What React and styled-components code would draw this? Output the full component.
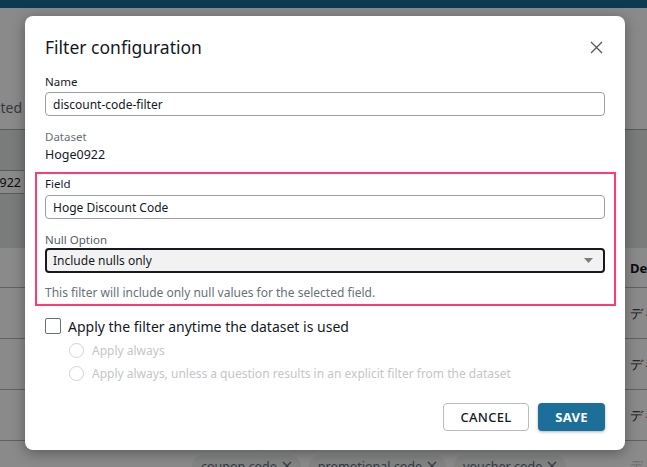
import React from 'react';
import styled, { createGlobalStyle } from 'styled-components';

const GlobalStyle = createGlobalStyle`
  html, body {
    margin: 0;
    padding: 0;
  }
  body {
    font-family: "Noto Sans", "Open Sans", sans-serif;
    color: #16191f;
  }
  * {
    box-sizing: border-box;
  }
`;

const Page = styled.div`
  position: relative;
  width: 647px;
  height: 467px;
  overflow: hidden;
  background: #fff;
`;

const TopBar = styled.div`
  height: 8px;
  background: #176c97;
`;

const HeadingRow = styled.div`
  height: 122px;
  display: flex;
  align-items: flex-end;
  padding-bottom: 11px;
  border-bottom: 1px solid #a9a9a9;
`;

const CroppedText = styled.div`
  width: ${({ $width }) => $width}px;
  display: flex;
  justify-content: flex-end;
  overflow: hidden;
  white-space: nowrap;
  padding-right: 2px;
  font-size: ${({ $size }) => $size}px;
  line-height: 20px;
  color: ${({ $color }) => $color || '#5f6b7a'};
`;

const Band = styled.div`
  height: 118px;
  background: #e2e3e3;
  padding-top: 40px;
`;

const DatasetBox = styled.div`
  width: 24px;
  height: 24px;
  display: flex;
  align-items: center;
  justify-content: flex-end;
  overflow: hidden;
  white-space: nowrap;
  background: #fff;
  border-top: 1px solid #a9a9a9;
  border-bottom: 1px solid #a9a9a9;
  padding-right: 3px;
  font-size: 12.5px;
  color: #16191f;
`;

const TableRow = styled.div`
  display: grid;
  grid-template-columns: 192px 437px 1fr;
  align-items: ${({ $align }) => $align || 'center'};
  height: ${({ $height }) => $height}px;
  border-bottom: 1px solid #b4b4b4;
`;

const Cell = styled.div`
  white-space: nowrap;
  overflow: hidden;
  font-size: 13px;
  font-weight: ${({ $bold }) => ($bold ? 700 : 400)};
  color: ${({ $faint }) => ($faint ? '#c2c2c2' : '#16191f')};
  padding-left: 1px;
  margin-top: ${({ $top }) => $top || 0}px;
`;

const ChipList = styled.div`
  display: flex;
  gap: 8px;
  margin-top: 14px;
`;

const Chip = styled.span`
  display: inline-flex;
  align-items: center;
  gap: 5px;
  height: 22px;
  padding: 0 9px;
  border-radius: 11px;
  background: #f1f2f3;
  font-size: 12.5px;
  color: #5f6b7a;
`;

const Overlay = styled.div`
  position: absolute;
  inset: 0;
  background: rgba(0, 0, 0, 0.46);
  display: flex;
  align-items: flex-start;
  padding: 16px 0 0 25px;
`;

const Modal = styled.div`
  width: 600px;
  background: #fff;
  border-radius: 8px;
  box-shadow: 0 3px 14px rgba(0, 0, 0, 0.35);
  padding: 19px 20px 19px;
`;

const TitleRow = styled.div`
  display: flex;
  justify-content: space-between;
  align-items: center;
  height: 24px;
`;

const Title = styled.h2`
  margin: 0;
  font-size: 17.5px;
  font-weight: 400;
  line-height: 24px;
  color: #16191f;
`;

const CloseButton = styled.button`
  display: flex;
  align-items: center;
  justify-content: center;
  width: 16px;
  height: 16px;
  padding: 0;
  margin-right: 1px;
  border: none;
  background: none;
  color: #545b64;
`;

const Group = styled.div`
  margin-top: ${({ $top }) => $top || 0}px;
`;

const Label = styled.div`
  font-size: 11.5px;
  line-height: 16px;
  color: ${({ $tone }) =>
    $tone === 'muted' ? '#687078' : $tone === 'mid' ? '#545b64' : '#16191f'};
`;

const Value = styled.div`
  margin-top: 1px;
  font-size: 12.5px;
  line-height: 18px;
  color: #16191f;
`;

const TextInput = styled.input`
  display: block;
  width: 100%;
  height: 24px;
  margin-top: ${({ $top }) => $top || 0}px;
  padding: 0 7px;
  border: 1px solid #9ba0a6;
  border-radius: 4px;
  font-family: inherit;
  font-size: 12px;
  color: #16191f;
  background: #fff;
  outline: none;
`;

const Highlight = styled.div`
  margin: 8px -11px 0 -10px;
  border: 2px solid #ff3b72;
  padding: 2px 9px 3px 8px;
`;

const Select = styled.div`
  display: flex;
  align-items: center;
  justify-content: space-between;
  height: 25px;
  padding: 0 10px 0 6px;
  border: 2px solid #16191f;
  border-radius: 4px;
  background: #f2f2f2;
  font-size: 12px;
  color: #16191f;
`;

const Help = styled.div`
  margin-top: 12px;
  font-size: 12px;
  line-height: 16px;
  color: #687078;
`;

const CheckRow = styled.label`
  display: flex;
  align-items: center;
  gap: 7px;
  height: 20px;
  margin-top: 10px;
  font-size: 14px;
  color: #16191f;
`;

const CheckBox = styled.span`
  width: 16px;
  height: 16px;
  border: 1px solid #687078;
  border-radius: 2px;
  background: #fff;
`;

const RadioRow = styled.label`
  display: flex;
  align-items: center;
  gap: 8px;
  height: 18px;
  margin: 5px 0 0 24px;
  font-size: 12px;
  color: #c4c6c8;
`;

const RadioCircle = styled.span`
  width: 15px;
  height: 15px;
  border: 1px solid #d1d3d5;
  border-radius: 50%;
`;

const Footer = styled.div`
  display: flex;
  justify-content: flex-end;
  gap: 9px;
  margin-top: 21px;
`;

const Button = styled.button`
  height: 28px;
  width: ${({ $width }) => $width}px;
  padding: 0;
  border-radius: 4px;
  font-family: inherit;
  font-size: 13px;
  letter-spacing: 0.3px;
  font-weight: ${({ $primary }) => ($primary ? 700 : 500)};
  color: ${({ $primary }) => ($primary ? '#fff' : '#16191f')};
  background: ${({ $primary }) => ($primary ? '#1c6f98' : '#fff')};
  border: ${({ $primary }) => ($primary ? 'none' : '1px solid #b9bcbf')};
  box-shadow: ${({ $primary }) => ($primary ? '0 1px 3px rgba(0,0,0,0.3)' : 'none')};
`;

const CloseIcon = () => (
  <svg width="13" height="13" viewBox="0 0 13 13" fill="none">
    <path d="M1 1L12 12M12 1L1 12" stroke="currentColor" strokeWidth="1.4" />
  </svg>
);

const CaretDown = () => (
  <svg width="9" height="5" viewBox="0 0 9 5">
    <polygon points="0,0 9,0 4.5,5" fill="#7d7d7d" />
  </svg>
);

const SmallX = () => (
  <svg width="10" height="10" viewBox="0 0 10 10" fill="none">
    <path d="M1 1L9 9M9 1L1 9" stroke="#5f6b7a" strokeWidth="1.3" />
  </svg>
);

const rows = ['ディフォルト', 'ディフォルト', 'ディフォルト'];
const chips = ['coupon code', 'promotional code', 'voucher code'];

const Background = () => (
  <>
    <TopBar />
    <HeadingRow>
      <CroppedText $width={24} $size={14}>
        <span>Selected</span>
      </CroppedText>
    </HeadingRow>
    <Band>
      <DatasetBox>
        <span>Hoge0922</span>
      </DatasetBox>
    </Band>
    <TableRow $height={40}>
      <Cell />
      <Cell />
      <Cell $bold>Default value</Cell>
    </TableRow>
    {rows.map((text, i) => (
      <TableRow key={i} $height={51}>
        <Cell />
        <Cell />
        <Cell>{text}</Cell>
      </TableRow>
    ))}
    <TableRow $height={51} $align="flex-start">
      <Cell />
      <ChipList>
        {chips.map((c) => (
          <Chip key={c}>
            {c}
            <SmallX />
          </Chip>
        ))}
      </ChipList>
      <Cell $faint $top={15}>ディフォルト</Cell>
    </TableRow>
  </>
);

const App = () => (
  <Page>
    <GlobalStyle />
    <Background />
    <Overlay>
      <Modal>
        <TitleRow>
          <Title>Filter configuration</Title>
          <CloseButton type="button" aria-label="Close">
            <CloseIcon />
          </CloseButton>
        </TitleRow>

        <Group $top={15}>
          <Label>Name</Label>
          <TextInput $top={2} readOnly value="discount-code-filter" />
        </Group>

        <Group $top={13}>
          <Label $tone="muted">Dataset</Label>
          <Value>Hoge0922</Value>
        </Group>

        <Highlight>
          <Label>Field</Label>
          <TextInput $top={3} readOnly value="Hoge Discount Code" />
          <Group $top={13}>
            <Label $tone="mid">Null Option</Label>
            <Select>
              <span>Include nulls only</span>
              <CaretDown />
            </Select>
          </Group>
          <Help>This filter will include only null values for the selected field.</Help>
        </Highlight>

        <CheckRow>
          <CheckBox />
          Apply the filter anytime the dataset is used
        </CheckRow>
        <RadioRow>
          <RadioCircle />
          Apply always
        </RadioRow>
        <RadioRow>
          <RadioCircle />
          Apply always, unless a question results in an explicit filter from the dataset
        </RadioRow>

        <Footer>
          <Button type="button" $width={86}>
            CANCEL
          </Button>
          <Button type="button" $width={67} $primary>
            SAVE
          </Button>
        </Footer>
      </Modal>
    </Overlay>
  </Page>
);

export default App;
